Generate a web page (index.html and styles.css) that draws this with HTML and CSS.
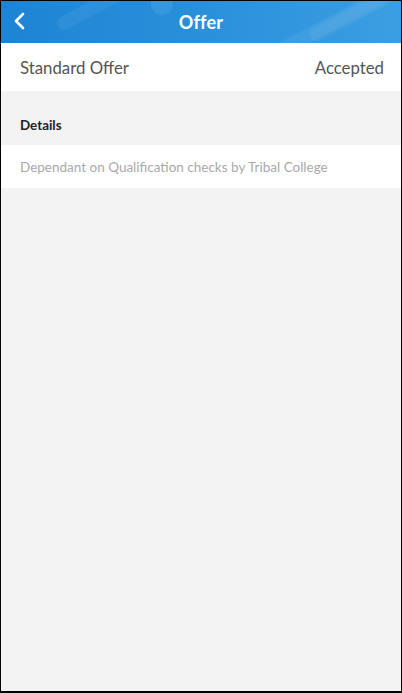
FILE: index.html
```html
<!DOCTYPE html>
<html lang="en">
<head>
    <meta charset="UTF-8">
    <meta name="viewport" content="width=device-width, initial-scale=1.0">
    <title>Offer</title>
    <link rel="stylesheet" href="styles.css">
</head>
<body>
    <div id="screen">
        <header id="top-bar">
            <span class="stripe stripe-one"></span>
            <span class="stripe stripe-two"></span>
            <span class="stripe stripe-three"></span>
            <span class="dot"></span>
            <a href="#" id="back" title="back">
                <svg width="14" height="18" viewBox="0 0 14 18">
                    <path d="M10 2 L3 9 L10 16" fill="none" stroke="#fff" stroke-width="2.6" stroke-linecap="round" stroke-linejoin="round"/>
                </svg>
            </a>
            <h1 id="title">Offer</h1>
        </header>

        <div class="row offer-row">
            <span>Standard Offer</span>
            <span>Accepted</span>
        </div>

        <div class="section-label">Details</div>

        <div class="row detail-row">
            <span>Dependant on Qualification checks by Tribal College</span>
        </div>
    </div>
</body>
</html>
```

FILE: styles.css
```css
html, body {
    margin: 0;
    height: 100%;
}

body {
    font-family: Lato, "Open Sans", sans-serif;
    background: #000;
}

#screen {
    box-sizing: border-box;
    height: 693px;
    border: 1px solid #000;
    border-bottom-width: 2px;
    background-color: #f3f3f3;
    overflow: hidden;
}

#top-bar {
    position: relative;
    height: 42px;
    display: flex;
    align-items: center;
    justify-content: center;
    overflow: hidden;
    background: linear-gradient(90deg, #1d84d5 0%, #2a90db 50%, #3c9ee2 100%);
}

/* faint decorative stripes in the bar */
.stripe {
    position: absolute;
    height: 14px;
    border-radius: 7px;
    background: rgba(255, 255, 255, 0.06);
    transform: rotate(-28deg);
}

.stripe-one {
    width: 120px;
    left: 50px;
    top: -10px;
}

.stripe-two {
    width: 220px;
    left: 230px;
    top: 10px;
}

.stripe-three {
    width: 160px;
    left: 300px;
    top: -8px;
}

.dot {
    position: absolute;
    width: 22px;
    height: 22px;
    border-radius: 50%;
    left: 150px;
    top: -8px;
    background: rgba(255, 255, 255, 0.07);
}

#back {
    position: absolute;
    left: 12px;
    top: 11px;
    display: flex;
}

#title {
    margin: 0;
    color: #fff;
    font-size: 18px;
    font-weight: 700;
    letter-spacing: 0.2px;
}

.row {
    display: flex;
    align-items: center;
    justify-content: space-between;
    background: #fff;
    padding: 0 17px 0 19px;
}

.offer-row {
    height: 48px;
    font-size: 16.8px;
    color: #555;
}

.section-label {
    height: 54px;
    box-sizing: border-box;
    padding: 26px 19px 0;
    font-size: 13.4px;
    font-weight: 700;
    color: #222;
}

.detail-row {
    height: 43px;
    font-size: 13.5px;
    color: #a9a9a9;
}
```
